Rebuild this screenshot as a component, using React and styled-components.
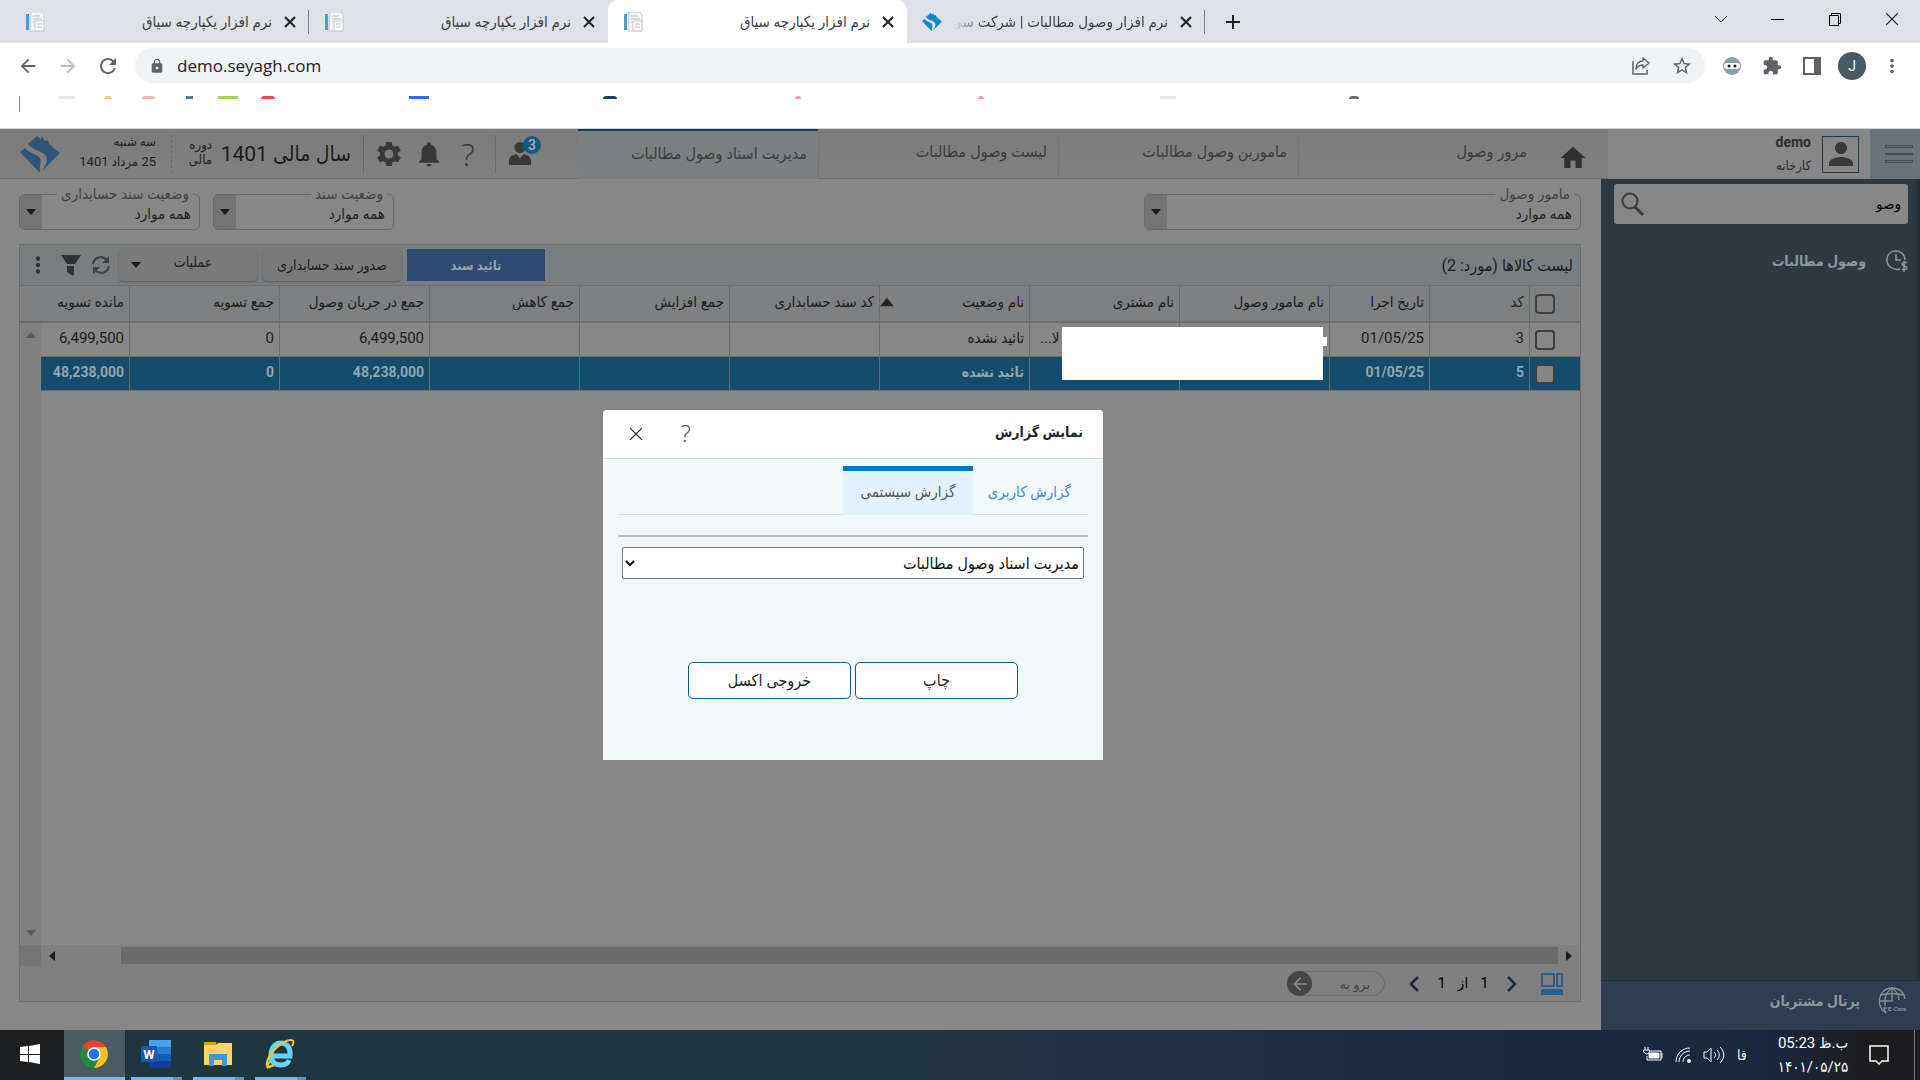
import React from "react";
import styled, { createGlobalStyle, css } from "styled-components";
import {
  MdArrowBack,
  MdArrowForward,
  MdExtension,
  MdHome,
  MdLock,
  MdMoreVert,
  MdNotifications,
  MdPerson,
  MdRefresh,
  MdSettings,
  MdStarOutline,
} from "react-icons/md";

const bookmarks = [
  { gap: 19, width: 1, color: "#5b8ff0", tall: true },
  { gap: 39, width: 16, color: "#e6e9ea" },
  { gap: 29, width: 8, color: "#e8d483", round: true },
  { gap: 30, width: 13, color: "#f6b6b8", round: true },
  { gap: 31, width: 7, color: "#4d7f8c" },
  { gap: 25, width: 20, color: "#a4d64c" },
  { gap: 23, width: 14, color: "#ec4a4e", round: true },
  { gap: 134, width: 20, color: "#2f6bff" },
  { gap: 174, width: 14, color: "#1d4257", round: true },
  { gap: 178, width: 6, color: "#f79d97", round: true },
  { gap: 177, width: 6, color: "#f79d97", round: true },
  { gap: 176, width: 16, color: "#e6e9ea" },
  { gap: 173, width: 10, color: "#6a7075", round: true },
];

const columns = [
  { key: "code", title: "کد", width: 100 },
  { key: "date", title: "تاریخ اجرا", width: 100 },
  { key: "agent", title: "نام مامور وصول", width: 150 },
  { key: "customer", title: "نام مشتری", width: 150 },
  { key: "status", title: "نام وضعیت", width: 150, sorted: true },
  { key: "accCode", title: "کد سند حسابداری", width: 150 },
  { key: "increase", title: "جمع افزایش", width: 150 },
  { key: "decrease", title: "جمع کاهش", width: 150 },
  { key: "flow", title: "جمع در جریان وصول", width: 150 },
  { key: "settled", title: "جمع تسویه", width: 150 },
  { key: "remain", title: "مانده تسویه" },
];

const rows = [
  {
    code: "3",
    date: "01/05/25",
    customer: "لا...",
    status: "تائید نشده",
    flow: "6,499,500",
    settled: "0",
    remain: "6,499,500",
  },
  {
    code: "5",
    date: "01/05/25",
    status: "تائید نشده",
    flow: "48,238,000",
    settled: "0",
    remain: "48,238,000",
    selected: true,
  },
];

const menuTabs = ["مرور وصول", "مامورین وصول مطالبات", "لیست وصول مطالبات", "مدیریت اسناد وصول مطالبات"];

/* ---------- icons ---------- */

const PageIcon = () => (
  <svg width="20" height="20" viewBox="0 0 20 20">
    <path d="M6 0h11l2 3v16H5z" fill="#f4f5f6" stroke="#c9ccd0" />
    <path d="M8 4h7M8 7h9M8 10h4" stroke="#b9bdc3" />
    <path d="M10 9h9v10h-9z" fill="#fafafa" stroke="#c9ccd0" />
    <path d="M12 12h5M12 15h5" stroke="#b9bdc3" />
    <path d="M1 2h3v16H1z" fill="#4a9cd6" />
  </svg>
);

const SeyaghLogo = ({ size, color }) => (
  <svg width={size} height={size} viewBox="0 0 40 38">
    <path
      d="M8 9l9-8 4 3 1-3 3 5 3-1 1 4 11 9-18 18c5-8 7-13 2-17-5-4-13-5-16-10z"
      fill={color}
    />
    <path d="M0 17l5-4c3 5 12 6 15 10 2 4-1 8 0 14l-1 0z" fill={color} />
  </svg>
);

const CloseIcon = ({ size = 12, thin }) => (
  <svg width={size} height={size} viewBox="0 0 12 12">
    <path d="M1 1l10 10M11 1L1 11" stroke="currentColor" strokeWidth={thin ? 1 : 2} fill="none" />
  </svg>
);

const PlusIcon = () => (
  <svg width="16" height="16" viewBox="0 0 16 16">
    <path d="M8 1v14M1 8h14" stroke="#202124" strokeWidth="2" />
  </svg>
);

const ShareIcon = () => (
  <svg width="20" height="20" viewBox="0 0 20 20" fill="none" stroke="#5f6368" strokeWidth="1.5">
    <path d="M2 5v13h14v-4" />
    <path d="M12 2l6 5-6 5V9c-3 0-5 1-7 4 0-5 3-8 7-8z" strokeLinejoin="round" />
  </svg>
);

const MaskIcon = () => (
  <svg width="18" height="18" viewBox="0 0 18 18">
    <circle cx="9" cy="9" r="9" fill="#88a0a6" />
    <rect x="1" y="6" width="16" height="6" rx="3" fill="#fff" />
    <circle cx="6" cy="9" r="1.5" fill="#222" />
    <circle cx="12" cy="9" r="1.5" fill="#222" />
  </svg>
);

const SidePanelIcon = () => (
  <svg width="18" height="18" viewBox="0 0 18 18">
    <path d="M0 0h18v18H0zM2 2v14h9V2z" fill="#5f6368" fillRule="evenodd" />
  </svg>
);

const UserIcon = () => (
  <svg width="24" height="24" viewBox="0 0 26 26" fill="#383838">
    <ellipse cx="13" cy="6" rx="6" ry="6" />
    <path d="M1 25v-4c0-5 4-7 8-8l4 5 4-5c4 1 8 3 8 8v4z" />
  </svg>
);

const SearchIcon = () => (
  <svg width="24" height="24" viewBox="0 0 24 24" fill="none" stroke="#3d3d3d">
    <circle cx="9" cy="9" r="7.5" strokeWidth="2" />
    <path d="M14 15l8 8" strokeWidth="3" />
  </svg>
);

const ClockMoneyIcon = () => (
  <svg width="22" height="24" viewBox="0 0 22 24" fill="none" stroke="#8f979c" strokeWidth="1.5">
    <path d="M14 20C7 22 1 17 1 11S5 2 10 2s9 4 9 9" />
    <path d="M10 5v6h5" />
    <path d="M21 14c-1-1-5-1-5 1s5 2 5 4-4 2-5 1M18 12v11" />
  </svg>
);

const ECareIcon = () => (
  <svg width="30" height="28" viewBox="0 0 30 28" fill="none" stroke="#868e96" strokeWidth="1.4">
    <path d="M8 26C-3 20 0 1 14 1c8 0 12 5 13 11" />
    <path d="M8 26c-1-2-2-3-2-5h3M14 1v13H1M14 1C8 5 7 10 7 14v5M14 1c6 4 7 8 7 12M3 8c7-2 15-2 22 0" />
    <text x="10" y="24" direction="ltr" fontSize="6" fontFamily="Roboto, sans-serif" fill="#868e96" stroke="none">
      E-Care
    </text>
  </svg>
);

const RefreshIcon = () => (
  <svg width="20" height="20" viewBox="0 0 20 20" fill="none" stroke="#3f4243" strokeWidth="2">
    <path d="M2 9a8 8 0 0 1 14-4M18 11a8 8 0 0 1-14 4" />
    <path d="M18 1v7h-7zM2 19v-7h7z" fill="#3f4243" stroke="none" />
  </svg>
);

const FilterIcon = () => (
  <svg width="20" height="22" viewBox="0 0 20 22" fill="#2f3233">
    <path d="M0 1h20l-6 9H6zM6 12h7v8l-1 2-6-4z" />
  </svg>
);

const Caret = ({ dir = "down", color = "#1b1b1b", size = 10 }) => {
  const d = { down: "M0 2h10L5 8z", up: "M0 8h10L5 2z", left: "M8 0v10L2 5z", right: "M2 0v10l6-5z" }[dir];
  return (
    <svg width={size} height={size} viewBox="0 0 10 10">
      <path d={d} fill={color} />
    </svg>
  );
};

const Chevron = ({ right }) => (
  <svg width="10" height="16" viewBox="0 0 10 16" fill="none" stroke="#1d2938" strokeWidth="2.5">
    <path d={right ? "M1 1l7 7-7 7" : "M9 1L2 8l7 7"} />
  </svg>
);

const LayoutIcon = () => (
  <svg width="22" height="22" viewBox="0 0 22 22" fill="none" stroke="#2a5f86" strokeWidth="2">
    <path d="M1 1h12v12H1zM16 1h5v12h-5z" />
    <path d="M0 16h22v6H0z" fill="#2a5f86" stroke="none" />
  </svg>
);

const WindowsIcon = () => (
  <svg width="20" height="20" viewBox="0 0 20 20" fill="#fff">
    <path d="M0 3l8-1v8H0zM9 2l11-2v10H9zM0 11h8v7l-8-1zM9 11h11v9L9 18z" />
  </svg>
);

const ChromeIcon = () => (
  <svg width="28" height="28" viewBox="0 0 28 28">
    <path d="M14 14L2 7a14 14 0 0 1 24 0z" fill="#ea4335" />
    <path d="M14 14L2 7a14 14 0 0 0 12 21l6-10z" fill="#1e8e3e" />
    <path d="M14 14V7h12a14 14 0 0 1-12 21l6-11z" fill="#fbc116" />
    <circle cx="14" cy="14" r="6.8" fill="#fff" />
    <circle cx="14" cy="14" r="5.3" fill="#2474f2" />
  </svg>
);

const WordIcon = () => (
  <svg width="30" height="28" viewBox="0 0 30 28">
    <path d="M8 0h22v7H8z" fill="#41a5ee" />
    <path d="M8 7h22v7H8z" fill="#2b7cd3" />
    <path d="M8 14h22v7H8z" fill="#185abd" />
    <path d="M8 21h22v7H8z" fill="#103f91" />
    <rect x="0" y="6" width="16" height="16" rx="1" fill="#1b56b5" />
    <text x="8" y="19" textAnchor="middle" fontSize="13" fontWeight="700" fontFamily="Roboto, sans-serif" fill="#fff">W</text>
  </svg>
);

const FolderIcon = () => (
  <svg width="28" height="26" viewBox="0 0 28 26">
    <path d="M0 1h12l1 4H0z" fill="#e09f08" />
    <path d="M0 4h12l2-2h14v22H0z" fill="#ffd367" />
    <path d="M5 25V13h18v12h-5v-6h-8v6z" fill="#3c98dd" />
  </svg>
);

const ExplorerIcon = () => (
  <svg width="30" height="30" viewBox="0 0 30 30" fill="none">
    <path d="M6 17h19c1-8-3-13-9-13S6 9 6 16s4 10 10 10c4 0 7-2 8-5" stroke="#62d5f9" strokeWidth="5" />
    <path d="M5 22c-5 8-3 8 4 4M9 26C1 30 0 26 4 18 9 9 20 1 26 1c3 0 3 3 1 6" stroke="#f4c824" strokeWidth="2" />
  </svg>
);

const PowerIcon = () => (
  <svg width="20" height="16" viewBox="0 0 20 16" fill="none" stroke="#fff">
    <path d="M6 4h12v9H4V9M2 0v3M5 0v3M0.500 3h6v2l-2 2h-1l-3-2zM19 6v5" />
    <path d="M6 6h10v5H6z" fill="#fff" />
  </svg>
);

const WifiIcon = () => (
  <svg width="16" height="16" viewBox="0 0 16 16" fill="none" stroke="#fff">
    <path d="M1 15C1 7 7 1 15 1M4 15C4 9 9 4 15 4M8 15c0-4 3-7 7-7" />
    <circle cx="14" cy="14" r="2" fill="#fff" stroke="none" />
  </svg>
);

const SoundIcon = () => (
  <svg width="22" height="18" viewBox="0 0 22 18" fill="none" stroke="#fff">
    <path d="M1 6h3l4-4v14l-4-4H1zM11 6c2 2 2 4 0 6M14 4c3 3 3 7 0 10M17 1c5 5 5 11 0 16" />
  </svg>
);

const NoticeIcon = () => (
  <svg width="20" height="20" viewBox="0 0 20 20" fill="none" stroke="#fff" strokeWidth="1.5">
    <path d="M1 1h18v15h-6l-3 3-3-3H1z" />
  </svg>
);

/* ---------- page ---------- */

function BrowserTab({ title, active, logo, divider }) {
  return (
    <TabBox $active={active} $narrow={logo} $divider={divider}>
      {logo ? <SeyaghLogo size={20} color="#0f86cf" /> : <PageIcon />}
      <TabTitle $fade={logo}>{title}</TabTitle>
      <IconButton aria-label="بستن زبانه">
        <CloseIcon />
      </IconButton>
    </TabBox>
  );
}

function Filter({ id, label, wide }) {
  return (
    <FilterBox $wide={wide}>
      <FilterLegend>
        <label htmlFor={id}>{label}</label>
      </FilterLegend>
      <FilterSelect id={id}>
        <option>همه موارد</option>
      </FilterSelect>
      <FilterArrow>
        <Caret />
      </FilterArrow>
    </FilterBox>
  );
}

function Grid() {
  return (
    <GridArea>
      <Table>
        <colgroup>
          <col width="51" />
          {columns.map((c) => (
            <col key={c.key} width={c.width} />
          ))}
        </colgroup>
        <thead>
          <tr>
            <Th>
              <Check type="checkbox" aria-label="انتخاب همه" />
            </Th>
            {columns.map((c) => (
              <Th key={c.key}>
                <ThInner>
                  {c.title}
                  {c.sorted && <Caret dir="up" size={14} color="#242424" />}
                </ThInner>
              </Th>
            ))}
          </tr>
        </thead>
        <tbody>
          {rows.map((row) => (
            <Tr key={row.code} $selected={row.selected}>
              <Td>
                <Check type="checkbox" aria-label={row.code} $filled={row.selected} />
              </Td>
              {columns.map((c) => (
                <Td key={c.key} $end={c.key === "customer"}>
                  {row[c.key]}
                  {c.key === "agent" && !row.selected && <Redacted />}
                </Td>
              ))}
            </Tr>
          ))}
        </tbody>
      </Table>
      <VScroll>
        <Caret dir="up" color="#5c5c5c" />
        <Caret dir="down" color="#5c5c5c" />
      </VScroll>
    </GridArea>
  );
}

function ReportDialog() {
  return (
    <Dialog role="dialog" aria-label="نمایش گزارش">
      <DialogHead>
        <DialogTitle>نمایش گزارش</DialogTitle>
        <HelpButton>?</HelpButton>
        <IconButton aria-label="بستن">
          <CloseIcon size={14} thin />
        </IconButton>
      </DialogHead>
      <DialogBody>
        <DialogTabs>
          <DialogTab>گزارش کاربری</DialogTab>
          <DialogTab $active>گزارش سیستمی</DialogTab>
        </DialogTabs>
        <Rule />
        <ReportSelect aria-label="گزارش">
          <option>مدیریت اسناد وصول مطالبات</option>
        </ReportSelect>
        <DialogActions>
          <DialogButton>چاپ</DialogButton>
          <DialogButton>خروجی اکسل</DialogButton>
        </DialogActions>
      </DialogBody>
    </Dialog>
  );
}

function App() {
  return (
    <Screen>
      <GlobalStyle />
      <TabStrip>
        <BrowserTab title="نرم افزار یکپارچه سیاق" divider />
        <BrowserTab title="نرم افزار یکپارچه سیاق" />
        <BrowserTab title="نرم افزار یکپارچه سیاق" active />
        <BrowserTab title="نرم افزار وصول مطالبات | شرکت سی" logo divider />
        <NewTab aria-label="زبانه جدید">
          <PlusIcon />
        </NewTab>
        <WindowButtons>
          <WindowButton aria-label="جستجوی زبانه">
            <svg width="14" height="14" viewBox="0 0 14 14" fill="none" stroke="#222">
              <path d="M1 4l6 6 6-6" />
            </svg>
          </WindowButton>
          <WindowButton aria-label="کوچک">
            <svg width="14" height="14" viewBox="0 0 14 14">
              <path d="M0 7h13v1H0z" />
            </svg>
          </WindowButton>
          <WindowButton aria-label="بازیابی">
            <svg width="14" height="14" viewBox="0 0 14 14" fill="none" stroke="#000">
              <path d="M1.500 3.500h9v10h-9zM3.500 3.500v-2h9v10h-2" />
            </svg>
          </WindowButton>
          <WindowButton aria-label="بستن">
            <CloseIcon size={14} thin />
          </WindowButton>
        </WindowButtons>
      </TabStrip>

      <Toolbar>
        <ToolCell aria-label="قبلی"><MdArrowBack size={22} color="#5f6368" /></ToolCell>
        <ToolCell aria-label="بعدی"><MdArrowForward size={22} color="#b9bbbe" /></ToolCell>
        <ToolCell aria-label="بارگذاری"><MdRefresh size={24} color="#5f6368" /></ToolCell>
        <Omnibox>
          <MdLock size={16} color="#5f6368" />
          <Address aria-label="نشانی" defaultValue="demo.seyagh.com" />
          <ShareIcon />
          <MdStarOutline size={22} color="#5f6368" />
        </Omnibox>
        <ToolCell aria-label="افزونه"><MaskIcon /></ToolCell>
        <ToolCell aria-label="افزونه ها"><MdExtension size={20} color="#5f6368" /></ToolCell>
        <ToolCell aria-label="پانل کناری"><SidePanelIcon /></ToolCell>
        <ToolCell aria-label="نمایه"><Profile>J</Profile></ToolCell>
        <ToolCell aria-label="بیشتر"><MdMoreVert size={22} color="#5f6368" /></ToolCell>
      </Toolbar>
      <Bookmarks>
        {bookmarks.map((b, i) => (
          <Bookmark key={i} $b={b} />
        ))}
      </Bookmarks>

      <AppFrame dir="rtl">
        <Header>
          <Hamburger aria-label="منو">
            <i />
            <i />
            <i />
          </Hamburger>
          <UserBlock>
            <Avatar>
              <MdPerson size={36} color="#383838" />
            </Avatar>
            <UserText>
              <b>demo</b>
              <span>کارخانه</span>
            </UserText>
          </UserBlock>
          <HomeLink href="#home" aria-label="خانه">
            <MdHome size={30} />
          </HomeLink>
          {menuTabs.map((t, i) => (
            <MenuTab key={t} href="#tab" $active={i === 3}>
              {t}
            </MenuTab>
          ))}
          <Tools dir="ltr">
            <SeyaghLogo size={40} color="#2d5577" />
            <DateText dir="rtl">
              <span>سه شنبه</span>
              <span>25 مرداد 1401</span>
            </DateText>
            <Divider $dashed />
            <PeriodLabel>
              <span>دوره</span>
              <span>مالی</span>
            </PeriodLabel>
            <PeriodValue dir="rtl">سال مالی 1401</PeriodValue>
            <Divider />
            <MdSettings size={30} />
            <MdNotifications size={30} />
            <HelpMark>?</HelpMark>
            <Divider />
            <Messages>
              <UserIcon />
              <Badge>3</Badge>
            </Messages>
          </Tools>
        </Header>

        <Body>
          <Sidebar>
            <SearchBox>
              <SearchInput aria-label="جستجو" defaultValue="وصو" />
              <SearchIcon />
            </SearchBox>
            <SideLink href="#receivables">
              <ClockMoneyIcon />
              وصول مطالبات
            </SideLink>
            <PortalLink href="#portal">
              <ECareIcon />
              پرتال مشتریان
            </PortalLink>
          </Sidebar>

          <Main>
            <Filters>
              <Filter id="agent" label="مامور وصول" wide />
              <Filter id="state" label="وضعیت سند" />
              <Filter id="accState" label="وضعیت سند حسابداری" />
            </Filters>
            <Panel>
              <PanelBar>
                <PanelTitle>لیست کالاها (مورد: 2)</PanelTitle>
                <BarButton $primary>تائید سند</BarButton>
                <BarButton>صدور سند حسابداری</BarButton>
                <BarButton>
                  <span>عملیات</span>
                  <Caret />
                </BarButton>
                <BarIcons>
                  <RefreshIcon />
                  <FilterIcon />
                  <MdMoreVert size={26} />
                </BarIcons>
              </PanelBar>
              <Grid />
              <HScroll>
                <Caret dir="right" />
                <Thumb />
                <Caret dir="left" />
                <Corner />
              </HScroll>
              <Pager>
                <LayoutIcon />
                <PageNav>
                  <Chevron right />
                  <span>1</span>
                  <span>از</span>
                  <span>1</span>
                  <Chevron />
                </PageNav>
                <GoTo>
                  <GoToInput aria-label="صفحه" placeholder="برو به" />
                  <GoToButton aria-label="برو">
                    <MdArrowBack size={20} />
                  </GoToButton>
                </GoTo>
              </Pager>
            </Panel>
          </Main>
        </Body>
        <ReportDialog />
      </AppFrame>

      <Taskbar>
        <TaskButton $start aria-label="شروع"><WindowsIcon /></TaskButton>
        <TaskButton $active aria-label="Chrome"><ChromeIcon /></TaskButton>
        <TaskButton $open aria-label="Word"><WordIcon /></TaskButton>
        <TaskButton $open aria-label="File Explorer"><FolderIcon /></TaskButton>
        <TaskButton $open aria-label="Internet Explorer"><ExplorerIcon /></TaskButton>
        <Tray>
          <PowerIcon />
          <WifiIcon />
          <SoundIcon />
          <Lang>فا</Lang>
          <Clock dir="rtl">
            <span>ب.ظ 05:23</span>
            <span>۱۴۰۱/۰۵/۲۵</span>
          </Clock>
          <NoticeIcon />
        </Tray>
      </Taskbar>
    </Screen>
  );
}

export default App;

const GlobalStyle = createGlobalStyle`
  * {
    box-sizing: border-box;
  }
  body {
    margin: 0;
    font-family: Roboto, "DejaVu Sans Condensed", "DejaVu Sans", sans-serif;
    font-size: 15px;
  }
  button, input, select {
    font: inherit;
    color: inherit;
  }
  a {
    color: inherit;
    text-decoration: none;
  }
  svg {
    flex-shrink: 0;
  }
`;

const Screen = styled.div`
  min-height: 100vh;
  display: flex;
  flex-direction: column;
  background: #fff;
`;

const TabStrip = styled.div`
  height: 43px;
  display: flex;
  align-items: stretch;
  padding-left: 10px;
  background: #dee1e6;
`;

const TabBox = styled.div`
  width: ${(p) => (p.$narrow ? 298 : 299)}px;
  display: flex;
  align-items: center;
  gap: 12px;
  padding: 0 13px 0 15px;
  position: relative;
  color: #3c4043;
  ${(p) =>
    p.$active &&
    css`
      background: #fff;
      border-radius: 10px 10px 0 0;
    `}
  ${(p) =>
    p.$divider &&
    css`
      &::after {
        content: "";
        position: absolute;
        right: 0;
        top: 10px;
        height: 24px;
        border-right: 1px solid #808388;
      }
    `}
`;

const TabTitle = styled.span`
  flex: 1;
  min-width: 0;
  direction: rtl;
  overflow: hidden;
  white-space: nowrap;
  ${(p) => p.$fade && "mask-image: linear-gradient(to right, transparent, #000 30px);"}
`;

const IconButton = styled.button`
  display: flex;
  padding: 0;
  border: 0;
  background: none;
  color: #202124;
`;

const NewTab = styled(IconButton)`
  align-items: center;
  padding: 0 20px;
`;

const WindowButtons = styled.div`
  display: flex;
  margin-left: auto;
`;

const WindowButton = styled(IconButton)`
  width: 57px;
  height: 37px;
  align-items: center;
  justify-content: center;
`;

const Toolbar = styled.div`
  display: flex;
  align-items: center;
  padding: 5px 8px 0;
`;

const ToolCell = styled(IconButton)`
  width: 40px;
  justify-content: center;
`;

const Omnibox = styled.div`
  flex: 1;
  height: 35px;
  display: flex;
  align-items: center;
  gap: 20px;
  margin: 0 7px;
  padding: 0 12px 0 14px;
  border-radius: 18px;
  background: #f1f3f4;
`;

const Address = styled.input`
  flex: 1;
  margin-left: -8px;
  padding: 0;
  border: 0;
  background: none;
  font-family: "Open Sans", sans-serif;
  font-size: 17px;
  color: #202124;
`;

const Profile = styled.span`
  width: 28px;
  height: 28px;
  border-radius: 50%;
  background: #455a64;
  color: #fff;
  font-size: 14px;
  line-height: 28px;
  text-align: center;
`;

const Bookmarks = styled.div`
  height: 46px;
  padding-top: 13px;
  display: flex;
  border-bottom: 1px solid #d5d5d5;
`;

const Bookmark = styled.i`
  width: ${(p) => p.$b.width}px;
  height: ${(p) => (p.$b.tall ? 16 : 3)}px;
  margin-left: ${(p) => p.$b.gap}px;
  background: ${(p) => p.$b.color};
  border-radius: ${(p) => (p.$b.round ? "6px 6px 0 0" : 0)};
`;

const AppFrame = styled.div`
  flex: 1;
  display: flex;
  flex-direction: column;
  position: relative;
  background: #878787;
  color: #1c1c1c;
`;

const Header = styled.header`
  height: 50px;
  display: flex;
  background: linear-gradient(#7b7b7b, #818181);
  border-bottom: 1px solid #6e6e6e;
`;

const Hamburger = styled.button`
  width: 50px;
  height: 50px;
  display: flex;
  flex-direction: column;
  justify-content: center;
  gap: 5px;
  padding: 0 7px 0 15px;
  border: 0;
  background: #6a7378;
  i {
    height: 3px;
    border: 1px solid #444c50;
  }
  i:nth-child(2) {
    height: 2px;
  }
`;

const UserBlock = styled.div`
  width: 262px;
  height: 50px;
  display: flex;
  align-items: center;
  gap: 11px;
  padding-right: 11px;
  background: #878787;
`;

const Avatar = styled.div`
  width: 37px;
  height: 37px;
  display: flex;
  align-items: center;
  justify-content: center;
  border: 1px solid #1d3b57;
`;

const UserText = styled.div`
  display: flex;
  flex-direction: column;
  gap: 4px;
  line-height: 19px;
  font-size: 13px;
  color: #2c2c2c;
  b {
    font-size: 14px;
    font-weight: 700;
  }
`;

const HomeLink = styled.a`
  width: 70px;
  padding: 14px 20px 0;
  color: #303030;
`;

const MenuTab = styled.a`
  width: 240px;
  padding: 0 11px;
  line-height: 46px;
  font-size: 16px;
  color: #3c3c3c;
  border-left: 1px solid #767676;
  ${(p) =>
    p.$active &&
    css`
      height: 50px;
      background: #7b8182;
      border-top: 2px solid #1b3a54;
      border-left: 0;
    `}
`;

const Tools = styled.div`
  flex: 1;
  display: flex;
  align-items: center;
  padding: 0 20px;
  color: #383838;
  & > svg:not(:first-child) {
    margin-left: 10px;
  }
`;

const Stack = styled.div`
  display: flex;
  flex-direction: column;
  color: #222;
  font-size: 13px;
  white-space: nowrap;
`;

const DateText = styled(Stack)`
  width: 96px;
  padding-bottom: 4px;
  line-height: 20px;
`;

const PeriodLabel = styled(Stack)`
  width: 40px;
  padding-bottom: 4px;
  line-height: 15px;
  text-align: right;
`;

const PeriodValue = styled.div`
  width: 139px;
  font-size: 21px;
  white-space: nowrap;
  color: #1c1c1c;
`;

const Divider = styled.i`
  height: 38px;
  margin-left: ${(p) => (p.$dashed ? 15 : 12)}px;
  border-left: 1px ${(p) => (p.$dashed ? "dashed" : "solid")} #6a6a6a;
`;

const HelpMark = styled.span`
  width: 30px;
  margin-left: 9px;
  font-family: "Open Sans", sans-serif;
  font-size: 32px;
  font-weight: 300;
  line-height: 40px;
  text-align: center;
`;

const Messages = styled.div`
  display: flex;
  position: relative;
  margin-left: 12px;
`;

const Badge = styled.span`
  position: absolute;
  top: -6px;
  left: 15px;
  width: 18px;
  height: 18px;
  border-radius: 50%;
  background: #145a80;
  color: #a5b4bd;
  font-size: 14px;
  font-weight: 500;
  line-height: 18px;
  text-align: center;
`;

const Body = styled.div`
  flex: 1;
  display: flex;
`;

const Sidebar = styled.aside`
  width: 319px;
  display: flex;
  flex-direction: column;
  background: #2e3942;
  box-shadow: inset -6px 0 4px -4px #222a31;
`;

const SearchBox = styled.div`
  display: flex;
  align-items: center;
  height: 40px;
  margin: 5px 12px 0 13px;
  padding: 0 7px;
  border-radius: 3px;
  background: #878787;
`;

const SearchInput = styled.input`
  flex: 1;
  min-width: 0;
  padding: 0;
  border: 0;
  background: none;
  color: #000;
`;

const SideLink = styled.a`
  display: flex;
  align-items: center;
  gap: 20px;
  height: 50px;
  margin-top: 12px;
  padding-right: 12px;
  color: #8f979c;
  font-size: 14px;
  font-weight: 700;
`;

const PortalLink = styled(SideLink)`
  margin-top: auto;
  gap: 18px;
  padding-bottom: 10px;
  border-top: 1px solid #242e38;
  background: #2f3d4f;
`;

const Main = styled.main`
  flex: 1;
  min-width: 0;
  display: flex;
  flex-direction: column;
  padding: 6px 20px 28px 19px;
`;

const Filters = styled.div`
  display: flex;
  gap: 13px;
`;

const FilterBox = styled.fieldset`
  width: ${(p) => (p.$wide ? 437 : 181)}px;
  height: 45px;
  min-width: 0;
  margin: 0;
  margin-left: ${(p) => (p.$wide ? "auto" : 0)};
  padding: 0;
  position: relative;
  border: 1px solid #6b6b6b;
  border-radius: 5px;
`;

const FilterLegend = styled.legend`
  margin-right: 6px;
  padding: 0 4px;
  line-height: 18px;
  color: #414141;
`;

const FilterSelect = styled.select`
  display: block;
  width: 100%;
  height: 22px;
  padding: 0 8px;
  border: 0;
  appearance: none;
  background: none;
  color: #1e1e1e;
`;

const FilterArrow = styled.span`
  position: absolute;
  left: 0;
  bottom: 0;
  width: 22px;
  height: 34px;
  display: flex;
  align-items: center;
  justify-content: center;
  border-radius: 4px 0 0 4px;
  background: #747474;
  pointer-events: none;
`;

const Panel = styled.section`
  flex: 1;
  display: flex;
  flex-direction: column;
  margin-top: 14px;
  border: 1px solid #6f6f6f;
  background: #808080;
`;

const PanelBar = styled.div`
  height: 41px;
  display: flex;
  align-items: center;
  gap: 6px;
  padding-right: 7px;
  background: #797e81;
  border-bottom: 1px solid #6f6f6f;
`;

const PanelTitle = styled.h1`
  margin: 0 0 0 auto;
  font-size: 16px;
  font-weight: 400;
`;

const BarButton = styled.button`
  width: 138px;
  height: 32px;
  display: flex;
  align-items: center;
  justify-content: center;
  padding: 0 12px;
  border: 0;
  border-radius: 4px;
  background: #7a7a7a;
  box-shadow: 0 1px 2px #5a5a5a;
  font-size: 14px;
  white-space: nowrap;
  span {
    flex: 1;
    padding-bottom: 6px;
  }
  ${(p) =>
    p.$primary &&
    css`
      border-radius: 0;
      background: #2c4a72;
      box-shadow: none;
      color: #9aa3af;
      font-size: 13px;
      font-weight: 700;
    `}
`;

const BarIcons = styled.div`
  display: flex;
  align-items: center;
  gap: 10px;
  padding: 0 2px 0 5px;
  color: #2f3233;
`;

const GridArea = styled.div`
  flex: 1;
  position: relative;
  background: #878787;
`;

const Table = styled.table`
  width: 100%;
  table-layout: fixed;
  border-collapse: separate;
  border-spacing: 0;
`;

const Th = styled.th`
  height: 37px;
  padding: 0 5px;
  background: #7f8081;
  border-bottom: 2px solid #6c6c6c;
  border-left: 1px solid #6c6c6c;
  font-weight: 400;
  text-align: right;
  white-space: nowrap;
  &:last-child {
    border-left: 0;
  }
`;

const ThInner = styled.div`
  display: flex;
  align-items: center;
  justify-content: space-between;
  padding-bottom: 4px;
  svg {
    margin-left: -5px;
  }
`;

const Tr = styled.tr`
  font-size: 15px;
  ${(p) =>
    p.$selected &&
    css`
      background: #154b6b;
      color: #93a5b0;
      font-size: 14px;
      font-weight: 700;
    `}
`;

const Td = styled.td`
  position: relative;
  height: 34px;
  padding: 0 5px 4px;
  border-bottom: 1px solid #6c6c6c;
  border-left: 1px solid #6c6c6c;
  line-height: 18px;
  text-align: ${(p) => (p.$end ? "left" : "right")};
  ${(p) => p.$end && "padding-left: 10px;"}
  &:last-child {
    border-left: 0;
  }
  &:first-child {
    padding-bottom: 0;
  }
`;

const Check = styled.input`
  display: block;
  width: 20px;
  height: 20px;
  margin: 0 auto 0 0;
  appearance: none;
  border: 2px solid #3e3e3e;
  border-radius: 4px;
  background: ${(p) => (p.$filled ? "#858585" : "none")};
`;

/* blanked-out names, lies over two rows and two columns */
const Redacted = styled.div`
  position: absolute;
  z-index: 1;
  top: 4px;
  right: 6px;
  width: 261px;
  height: 53px;
  background: #fff;
  &::after {
    content: "";
    position: absolute;
    top: 10px;
    right: -4px;
    width: 4px;
    height: 9px;
    background: #fff;
  }
`;

const VScroll = styled.div`
  position: absolute;
  left: 0;
  top: 37px;
  bottom: 0;
  width: 21px;
  display: flex;
  flex-direction: column;
  align-items: center;
  justify-content: space-between;
  padding: 7px 0;
  background: #808080;
`;

const HScroll = styled.div`
  height: 21px;
  display: flex;
  align-items: center;
  gap: 6px;
  padding-right: 6px;
  background: #808080;
`;

const Thumb = styled.div`
  flex: 1;
  height: 17px;
  margin-left: 58px;
  background: #6a6a6a;
`;

const Corner = styled.div`
  width: 21px;
  height: 21px;
  background: #757575;
`;

const Pager = styled.div`
  height: 35px;
  display: flex;
  align-items: center;
  gap: 24px;
  padding-right: 17px;
`;

const PageNav = styled.div`
  display: flex;
  align-items: center;
  justify-content: center;
  gap: 12px;
  width: 108px;
  color: #000;
  line-height: 20px;
  svg {
    margin: 0 6px;
  }
  span {
    padding-bottom: 2px;
  }
`;

const GoTo = styled.div`
  width: 98px;
  height: 25px;
  display: flex;
  border: 1px solid #6c6c6c;
  border-radius: 13px;
`;

const GoToInput = styled.input`
  flex: 1;
  min-width: 0;
  padding: 0 14px 0 0;
  border: 0;
  background: none;
  font-size: 14px;
  &::placeholder {
    color: #444;
    opacity: 1;
  }
`;

const GoToButton = styled.button`
  width: 25px;
  height: 25px;
  display: flex;
  align-items: center;
  justify-content: center;
  margin: -1px 0 0 -1px;
  padding: 0;
  border: 0;
  border-radius: 50%;
  background: #444646;
  color: #8a8a8a;
`;

const Dialog = styled.div`
  position: absolute;
  top: 281px;
  left: calc(50% - 357px);
  width: 500px;
  height: 350px;
  display: flex;
  flex-direction: column;
  border-radius: 4px 4px 0 0;
  overflow: hidden;
  background: #f0f8fa;
`;

const DialogHead = styled.div`
  height: 49px;
  display: flex;
  align-items: center;
  padding: 0 20px 0 26px;
  background: #fff;
  border-bottom: 1px solid #d9dfe1;
`;

const DialogTitle = styled.h2`
  margin: 0 0 0 auto;
  padding-bottom: 4px;
  font-size: 14px;
  font-weight: 700;
  color: #212529;
`;

const HelpButton = styled(IconButton)`
  margin-left: 38px;
  padding-bottom: 2px;
  font-family: "Open Sans", sans-serif;
  font-size: 23px;
  font-weight: 300;
  color: #444;
`;

const DialogBody = styled.div`
  flex: 1;
  display: flex;
  flex-direction: column;
  padding: 7px 15px;
`;

const DialogTabs = styled.div`
  display: flex;
  height: 49px;
  border-bottom: 1px solid #d8dee1;
`;

const DialogTab = styled.button`
  height: 49px;
  padding: 3px 17px 0;
  border: 0;
  background: none;
  color: #428bca;
  font-size: 15px;
  font-weight: 500;
  white-space: nowrap;
  &:first-child {
    width: 115px;
  }
  ${(p) =>
    p.$active &&
    css`
      width: 130px;
      padding-top: 0;
      padding-bottom: 2px;
      background: #e3f1fd;
      border-top: 5px solid #0078c1;
      color: #555;
    `}
`;

const Rule = styled.hr`
  width: 100%;
  margin: 20px 0 10px;
  border: 0;
  border-top: 2px solid #b8c0c3;
`;

const ReportSelect = styled.select`
  height: 32px;
  margin: 0 4px;
  border: 1px solid #767676;
  border-radius: 2px;
  background-color: #fff;
  color: #111;
  font-size: 16px;
`;

const DialogActions = styled.div`
  display: flex;
  justify-content: center;
  gap: 4px;
  margin-top: 83px;
`;

const DialogButton = styled.button`
  width: 163px;
  height: 37px;
  border: 1px solid #0b5c85;
  border-radius: 5px;
  background: #fff;
  color: #212529;
  font-size: 16px;
`;

const Taskbar = styled.footer`
  height: 50px;
  display: flex;
  background: linear-gradient(to right, #1d1f20, #20363f 64px, #20363f 45%, #1b2a40 75%, #1a2740 92%, #1d1d1f 97%);
`;

const TaskButton = styled.button`
  width: 76px;
  display: flex;
  align-items: center;
  justify-content: center;
  padding: 0;
  border: 0;
  border-bottom: 3px solid transparent;
  background: none;
  ${(p) =>
    p.$start &&
    css`
      width: 64px;
      padding: 0 4px 0 0;
      background: #1c1e1f;
    `}
  ${(p) =>
    p.$active &&
    css`
      width: 61px;
      padding: 0 2px 0 0;
      background: #4a5b62;
      border-color: #76b9ed;
    `}
  ${(p) =>
    p.$open &&
    css`
      width: 51px;
      margin-left: 6px;
      margin-right: 5px;
      padding: 0 2px 0 0;
      border-image: linear-gradient(to right, #76b9ed 40px, #5f93bd 40px) 3;
    `}
`;

const Tray = styled.div`
  display: flex;
  align-items: center;
  margin-left: auto;
  margin-right: 5px;
  padding-right: 25px;
  gap: 12px;
  border-right: 1px solid #777;
  color: #fff;
`;

const Lang = styled.span`
  width: 20px;
  font-size: 14px;
`;

const Clock = styled.div`
  display: flex;
  flex-direction: column;
  width: 88px;
  align-items: center;
  line-height: 24px;
  white-space: nowrap;
`;
